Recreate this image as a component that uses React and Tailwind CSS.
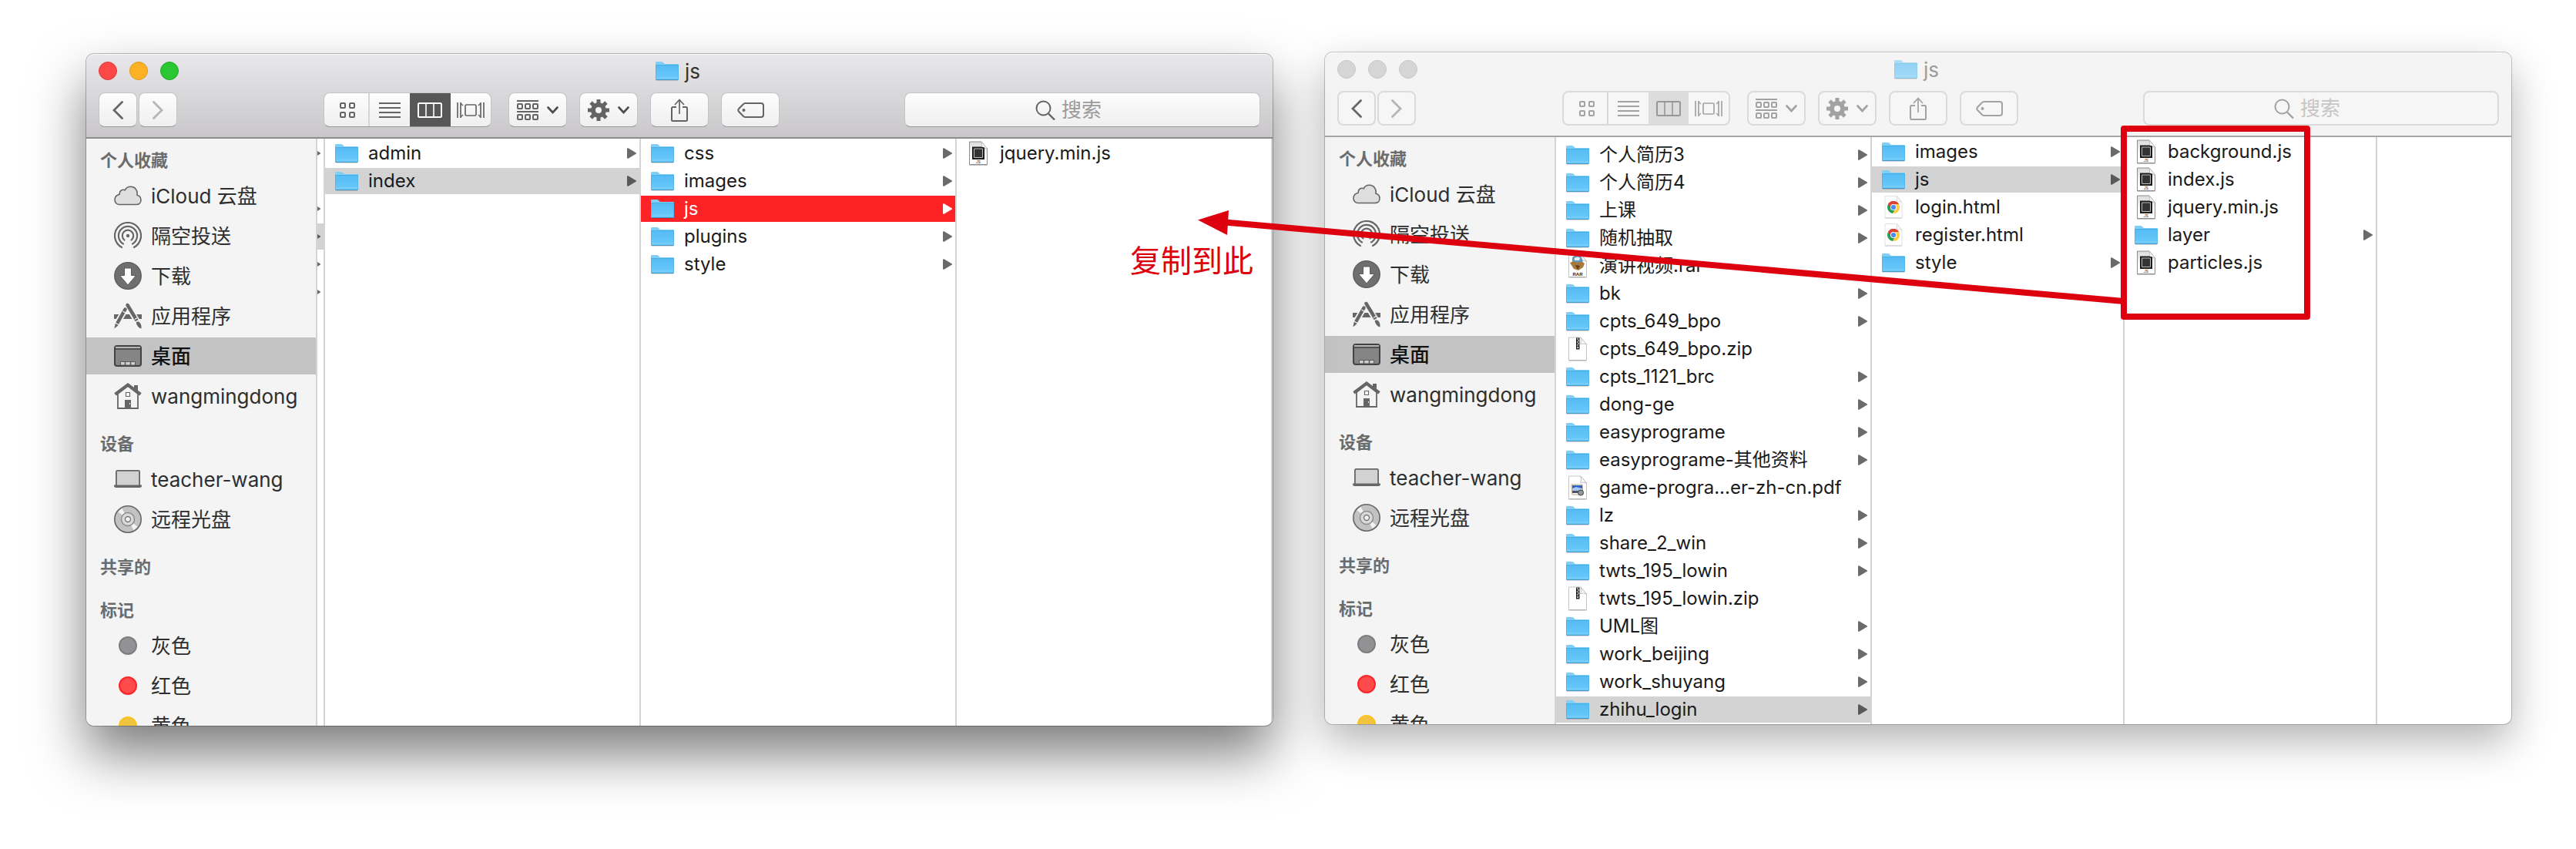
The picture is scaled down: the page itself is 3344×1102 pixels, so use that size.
import React from "react";

/* ---------- file icons ---------- */

function Folder({ faded }) {
  return (
    <svg width="30" height="26" viewBox="0 0 30 26" className={faded ? "shrink-0 opacity-60" : "shrink-0"} aria-hidden="true">
      <defs>
        <linearGradient id="folderFront" x1="0" y1="0" x2="0" y2="1">
          <stop offset="0" stopColor="#55bdf5" />
          <stop offset="1" stopColor="#6cc9fb" />
        </linearGradient>
      </defs>
      <path d="M1 25.5h28" stroke="#000" strokeOpacity=".14" />
      <path d="M0 2.2Q0 1 1.2 1H8q1 0 1.7.8l1.6 1.7q.6.6 1.5.6h16q1.2 0 1.2 1.2V12H0z" fill="#80cff8" />
      <path d="M0 6h30v17.8q0 1.2-1.2 1.2H1.2Q0 25 0 23.800z" fill="url(#folderFront)" />
      <path d="M0 5.500h30" stroke="#4aaee0" />
      <path d="M.5 22h29" stroke="#7fd2fc" />
      <path d="M.5 24.500h29" stroke="#4497c6" />
      <path d="M.5 5v19M29.500 5v19" stroke="#4db1e6" strokeOpacity=".7" />
    </svg>
  );
}

function Page({ children, light }) {
  return (
    <svg width="30" height="32" viewBox="0 0 30 32" className="shrink-0" aria-hidden="true">
      <defs>
        <linearGradient id="pageGrey" x1="0" y1="0" x2="0" y2="1">
          <stop offset="0" stopColor="#dcdcdc" />
          <stop offset="0.7" stopColor="#ffffff" />
        </linearGradient>
      </defs>
      <path
        d="M3.500 1h15.500l7.500 9v20.500h-23z"
        fill={light ? "#ffffff" : "url(#pageGrey)"}
        stroke={light ? "#c6c6c6" : "#8e8e8e"}
      />
      <path d="M3.500 31h23" stroke={light ? "#a9a9a9" : "#8a8a8a"} />
      <path d="M19 1q1.500 6-.5 8.500q4-1 8 .5z" fill="#fafafa" stroke="#b5b5b5" strokeWidth=".8" />
      {children}
    </svg>
  );
}

function JsFile() {
  return (
    <Page>
      <path d="M7 7.500h12l4 1v15.500H7z" fill="#1d1d1d" />
      <path d="M9.500 10h11v11.500h-11z" fill="#333" stroke="#bdbdbd" />
      <text x="15" y="29" textAnchor="middle" fontSize="5" fontStyle="italic" fontFamily="Liberation Sans, sans-serif" fill="#333">JS</text>
    </Page>
  );
}

function ZipFile() {
  return (
    <Page light>
      <path d="M13 1.500h4.500v15H13z" fill="#222" />
      <path d="M14 3h2M15 5h2M14 7h2M15 9h2M14 11h2" stroke="#fff" />
      <path d="M14.500 13h1.500v2h-1.500z" fill="#fff" />
    </Page>
  );
}

function RarFile() {
  return (
    <Page light>
      <path d="M8 5q6-6 12 0l2 5-6 3-8-2z" fill="#5b9cc9" />
      <path d="M11 6q4-3 7 0l-1 3h-6z" fill="#e9eef2" />
      <path d="M5 12l5-2 5 2 5-2 4 3-2 5-6 4-6-2z" fill="#a9783c" />
      <path d="M12 15l6 1-3 5z" fill="#5e3d18" />
      <text x="15" y="29" textAnchor="middle" fontSize="6" fontWeight="bold" fontFamily="Liberation Sans, sans-serif" fill="#222">RAR</text>
    </Page>
  );
}

function PdfFile() {
  return (
    <Page light>
      <path d="M7 12h14l1 13H8z" fill="#fff" stroke="#b9a48a" />
      <path d="M8 13h13v5l-6 1-7 1z" fill="#2f62c4" />
      <path d="M8 17l5-2 8 2v3H8z" fill="#a8c9ee" />
      <path d="M8 20h13v3H8z" fill="#4e5560" />
      <circle cx="19" cy="22.500" r="3.500" fill="#8d99a3" stroke="#444" />
    </Page>
  );
}

function HtmlFile() {
  return (
    <svg width="30" height="32" viewBox="0 0 30 32" className="shrink-0" aria-hidden="true">
      <path d="M4 1.500h15.500l6.500 8v20.500H4z" fill="#fff" stroke="#e2e2e2" />
      <path d="M4 30h22" stroke="#c9c9c9" />
      <circle cx="15" cy="16" r="8" fill="#fff" />
      <path d="M15 16L8.070 12a8 8 0 0 1 13.860 0z" fill="#dd4433" />
      <path d="M8.070 12A8 8 0 0 0 14 23.900l4-6.300L15 16z" fill="#24a159" />
      <path d="M21.930 12A8 8 0 0 1 14 23.900L18.500 17l-1-5z" fill="#fccd3d" />
      <path d="M8.070 12L12 18.500l3-6.500h6.930a8 8 0 0 0-13.860 0z" fill="#dd4433" />
      <circle cx="15" cy="16" r="4" fill="#fff" />
      <circle cx="15" cy="16" r="3.100" fill="#4b8bf4" />
      <path d="M19.500 1.500l-.5 7q4-.5 7 1z" fill="#f8f8f8" stroke="#ddd" />
    </svg>
  );
}

const fileIcons = { folder: Folder, js: JsFile, zip: ZipFile, rar: RarFile, pdf: PdfFile, html: HtmlFile };

function Triangle() {
  return (
    <svg width="12" height="14" viewBox="0 0 12 14" className="shrink-0" aria-hidden="true">
      <path d="M1 1.200L11 7 1 12.800z" fill="currentColor" stroke="currentColor" strokeWidth="2" strokeLinejoin="round" />
    </svg>
  );
}

/* ---------- sidebar icons ---------- */

const glyph = "#666666";

function Cloud() {
  return (
    <svg width="36" height="26" viewBox="0 0 36 26" aria-hidden="true">
      <path
        d="M7 24.500h22c3.500 0 6-2.500 6-6s-2-5.500-5-6.300C31 5.500 27 1.300 21.500 1.300c-3.300 0-6 1.900-7.300 4.500-3.300-1.500-7 .5-7 4.200v1.200C3.500 12 1 14.500 1 18.300c0 3.500 2.500 6.200 6 6.200z"
        fill="#dedede" stroke={glyph} strokeWidth="1.600"
      />
    </svg>
  );
}

function AirDrop() {
  return (
    <svg width="36" height="36" viewBox="0 0 36 36" fill="none" stroke={glyph} strokeWidth="2.200" strokeLinecap="round" aria-hidden="true">
      <path d="M10 33A17 17 0 1 1 26 33" />
      <path d="M12 28.500A12.100 12.100 0 1 1 24 28.500" />
      <path d="M13.500 23.500A7.200 7.200 0 1 1 22.500 23.500" />
      <circle cx="18" cy="18" r="2.200" fill={glyph} stroke="none" />
    </svg>
  );
}

function Download() {
  return (
    <svg width="36" height="36" viewBox="0 0 36 36" aria-hidden="true">
      <circle cx="18" cy="18" r="17.200" fill="#6f6f6f" stroke="#5f5f5f" strokeWidth="1.500" />
      <path d="M13.500 8h9v9.500h6L18 30 7.500 17.500h6z" fill="#fff" stroke="#5a5a5a" />
    </svg>
  );
}

function Apps() {
  return (
    <svg width="36" height="36" viewBox="0 0 36 36" aria-hidden="true">
      <path d="M0 16h36v6H0z" fill={glyph} />
      <path d="M15.500 8L1.500 32M17.500 4L34 32" stroke="#f4f4f4" strokeWidth="8" />
      <path d="M17.500 4L29 23" stroke={glyph} strokeWidth="4.500" strokeLinecap="round" />
      <path d="M14.500 9.500L4 28" stroke={glyph} strokeWidth="4.500" strokeLinecap="round" />
      <path d="M11.500 12l4 2.400M27 22.500l3.800-2.300" stroke="#f4f4f4" strokeWidth="1.200" />
      <path d="M1.800 28l3.800 2.300L.3 34.500z" fill={glyph} />
      <path d="M28.500 26.500q3-3 6 1.500 1.500 3 1 6.500-5-1-7-8z" fill={glyph} />
      <path d="M1.300 26.800l5 3M27.300 26.300l5-2.900" stroke="#f4f4f4" strokeWidth="1.300" />
    </svg>
  );
}

function Desktop() {
  return (
    <svg width="36" height="28" viewBox="0 0 36 28" aria-hidden="true">
      <rect x="1" y="1" width="34" height="26" rx="3" fill="#858585" stroke="#424242" strokeWidth="2" />
      <path d="M2 2h32v2H2z" fill="#b5b5b5" />
      <path d="M1 5h34" stroke="#424242" strokeWidth="1.400" />
      <path d="M8.500 21.500h19V26h-19z" fill="#d0d0d0" stroke="#5a5a5a" />
      <path d="M14.500 22v4M21.500 22v4" stroke="#5a5a5a" strokeWidth="1.500" />
    </svg>
  );
}

function House() {
  return (
    <svg width="36" height="34" viewBox="0 0 36 34" aria-hidden="true">
      <path d="M26 3h5v10h-5z" fill={glyph} />
      <path d="M5 14L18 4l13 10v19H5z" fill="#f4f4f4" stroke={glyph} strokeWidth="1.800" />
      <path d="M1.500 14.800L18 2.500l16.500 12.300" fill="none" stroke={glyph} strokeWidth="4" />
      <path d="M15.500 12.500h5v5h-5z" fill="#fff" stroke={glyph} strokeWidth="1.200" />
      <path d="M14 22h8v11h-8z" fill={glyph} />
      <path d="M20 26h1v2h-1z" fill="#eee" />
    </svg>
  );
}

function Laptop() {
  return (
    <svg width="36" height="24" viewBox="0 0 36 24" aria-hidden="true">
      <rect x="2.900" y=".9" width="30.200" height="20" rx="1.500" fill="#d2d2d2" stroke={glyph} strokeWidth="1.800" />
      <path d="M0 19.500h36v1.500q-.5 2-2.500 2h-31Q.5 23 0 21z" fill={glyph} />
    </svg>
  );
}

function Disc() {
  return (
    <svg width="36" height="36" viewBox="0 0 36 36" aria-hidden="true">
      <circle cx="18" cy="18" r="17.200" fill="#c2c2c2" stroke={glyph} strokeWidth="1.600" />
      <path d="M18 18L5.500 8.500q2-3 5-4.500zM18 18l12.500 9.500q-2 3-5 4.500z" fill="#f2f2f2" />
      <circle cx="18" cy="18" r="8.500" fill="#dadada" stroke="#8b8b8b" strokeWidth="1.400" />
      <circle cx="18" cy="18" r="3.500" fill="#f4f4f4" stroke="#777" strokeWidth="1.400" />
    </svg>
  );
}

const Dot = ({ tone }) => <span className={"block size-6 rounded-full border-2 " + tone} />;

/* ---------- toolbar icons ---------- */

const GridIcon = () => (
  <svg width="20" height="20" viewBox="0 0 20 20" fill="none" stroke="currentColor" strokeWidth="2" aria-hidden="true">
    <rect x="1" y="1" width="6" height="6" rx="1" />
    <rect x="13" y="1" width="6" height="6" rx="1" />
    <rect x="1" y="13" width="6" height="6" rx="1" />
    <rect x="13" y="13" width="6" height="6" rx="1" />
  </svg>
);

const ListIcon = () => (
  <svg width="28" height="20" viewBox="0 0 28 20" stroke="currentColor" strokeWidth="2" aria-hidden="true">
    <path d="M0 1h28M0 7h28M0 13h28M0 19h28" />
  </svg>
);

const ColumnsIcon = () => (
  <svg width="32" height="20" viewBox="0 0 32 20" fill="none" stroke="currentColor" strokeWidth="2" aria-hidden="true">
    <rect x="1" y="1" width="30" height="18" rx="1.500" />
    <path d="M11 1v18M21 1v18" strokeWidth="1.600" />
  </svg>
);

const CoverIcon = () => (
  <svg width="36" height="20" viewBox="0 0 36 20" fill="none" stroke="currentColor" strokeWidth="1.700" aria-hidden="true">
    <path d="M1 0v20M35 0v20" />
    <path d="M5 0v20M31 0v20" />
    <path d="M5 1l3 3M5 19l3-3M31 1l-3 3M31 19l-3-3" strokeWidth="1.400" />
    <rect x="11" y="3" width="14" height="14" rx="1.500" />
  </svg>
);

const ArrangeIcon = () => (
  <svg width="28" height="26" viewBox="0 0 28 26" fill="none" stroke="currentColor" strokeWidth="2" aria-hidden="true">
    <path d="M0 1h28M0 15h28" />
    <rect x="1" y="5" width="6" height="6" rx="1" />
    <rect x="11" y="5" width="6" height="6" rx="1" />
    <rect x="21" y="5" width="6" height="6" rx="1" />
    <rect x="1" y="19" width="6" height="6" rx="1" />
    <rect x="11" y="19" width="6" height="6" rx="1" />
    <rect x="21" y="19" width="6" height="6" rx="1" />
  </svg>
);

const GearIcon = () => (
  <svg width="28" height="28" viewBox="0 0 28 28" fill="none" stroke="currentColor" aria-hidden="true">
    <circle cx="14" cy="14" r="7" strokeWidth="6" />
    <path
      d="M14 0v5M14 23v5M0 14h5M23 14h5M4.100 4.100l3.600 3.600M20.300 20.300l3.600 3.600M4.100 23.900l3.600-3.600M20.300 7.700l3.600-3.600"
      strokeWidth="5"
    />
  </svg>
);

const DownChevron = () => (
  <svg width="15" height="10" viewBox="0 0 15 10" fill="none" stroke="currentColor" strokeWidth="2.600" strokeLinecap="round" aria-hidden="true">
    <path d="M1.500 1.500l6 6.500 6-6.500" />
  </svg>
);

const ShareIcon = () => (
  <svg width="22" height="30" viewBox="0 0 22 30" fill="none" stroke="currentColor" strokeWidth="2" aria-hidden="true">
    <path d="M7 11H2.500Q1 11 1 12.500v15Q1 29 2.500 29h17q1.500 0 1.500-1.500v-15Q21 11 19.500 11H15" />
    <path d="M11 20V2M5 8l6-6.500L17 8" strokeWidth="1.700" />
  </svg>
);

const TagIcon = () => (
  <svg width="35" height="20" viewBox="0 0 35 20" fill="none" stroke="currentColor" strokeWidth="2" aria-hidden="true">
    <path d="M10.500 1H31q3 0 3 3v12q0 3-3 3H10.500q-1.700 0-2.700-1.300L1.800 11.500q-1-1.500 0-3l6-6.200Q8.800 1 10.500 1z" />
    <circle cx="8.500" cy="10" r="2" fill="currentColor" stroke="none" />
  </svg>
);

const SearchIcon = () => (
  <svg width="26" height="26" viewBox="0 0 26 26" fill="none" stroke="currentColor" strokeWidth="2" aria-hidden="true">
    <circle cx="10.500" cy="10.500" r="9" />
    <path d="M17 17.500l8 8" strokeWidth="2.400" />
  </svg>
);

const NavChevron = ({ flip }) => (
  <svg width="14" height="24" viewBox="0 0 14 24" fill="none" stroke="currentColor" strokeWidth="2.800" strokeLinecap="round" aria-hidden="true">
    <path d={flip ? "M1.500 1.500L12 12 1.500 22.500" : "M12.500 1.500L2 12l10.500 10.500"} />
  </svg>
);

/* ---------- window header ---------- */

const activeTheme = {
  window: "z-10 mt-0.5 border-t-[#fafafa] shadow-[0_0_0_1px_rgba(0,0,0,0.25),0_36px_70px_rgba(0,0,0,0.52)]",
  header: "bg-linear-to-b from-[#e8e7e9] to-[#c9c7ca] border-[#8c8c8c]",
  title: "text-[#333]",
  button:
    "bg-linear-to-b from-[#fdfdfd] to-[#efefef] border border-[#c4c3c5] border-b-[#979797] text-[#646464]",
  chevron: "text-[#4d4d4d]",
  divide: "border-[#d6d6d6]",
  selected: "bg-[#575757] text-white",
  placeholder: "placeholder:text-[#9b9b9b]",
  lights: ["bg-[#fc4948] border-[#df3637]", "bg-[#fdb225] border-[#dc9720]", "bg-[#2ac733] border-[#20a929]"],
};

const idleTheme = {
  window: "border-t-white shadow-[0_0_0_1px_rgba(0,0,0,0.2),0_22px_54px_rgba(0,0,0,0.3)]",
  header: "bg-[#f4f4f4] border-[#a6a6a6]",
  title: "text-[#9c9c9c]",
  button: "bg-[#f6f6f6] border-2 border-[#dadada] text-[#a2a2a2]",
  chevron: "text-[#a2a2a2]",
  divide: "border-[#d8d8d8]",
  selected: "bg-[#dcdcdc] text-[#979797]",
  placeholder: "placeholder:text-[#c6c6c6]",
  lights: ["bg-[#d5d5d5] border-[#c5c5c5]", "bg-[#d5d5d5] border-[#c5c5c5]", "bg-[#d5d5d5] border-[#c5c5c5]"],
};

function ToolButton({ theme, label, className, children }) {
  return (
    <button type="button" aria-label={label} className={"flex h-[45px] items-center justify-center rounded-lg " + theme.button + " " + className}>
      {children}
    </button>
  );
}

function Header({ theme, id }) {
  const views = [
    ["图标视图", <GridIcon />],
    ["列表视图", <ListIcon />],
    ["分栏视图", <ColumnsIcon />],
    ["封面流视图", <CoverIcon />],
  ];
  return (
    <header className={"flex h-[109px] flex-col border-b-2 px-4 " + theme.header}>
      <div className="grid h-[49px] grid-cols-3 items-center pb-[7px]">
        <div className="flex gap-4">
          {theme.lights.map((tone, i) => (
            <button key={i} type="button" aria-label={["关闭", "最小化", "缩放"][i]} className={"size-6 rounded-full border " + tone} />
          ))}
        </div>
        <h1 className={"flex items-center justify-center gap-2 pr-1 text-[26px] " + theme.title}>
          <Folder faded={theme === idleTheme} />
          js
        </h1>
      </div>
      <div className="flex items-center">
        <div className="flex gap-0.5">
          <ToolButton theme={theme} label="后退" className="w-[50px]">
            <span className="text-[#666]"><NavChevron /></span>
          </ToolButton>
          <ToolButton theme={theme} label="前进" className="w-[50px]">
            <span className="text-[#b5b5b5]"><NavChevron flip /></span>
          </ToolButton>
        </div>
        <div className={"ml-[190px] mr-[22px] flex h-[45px] w-[218px] overflow-hidden rounded-lg " + theme.button}>
          {views.map(([label, icon], i) => (
            <button
              key={label}
              type="button"
              aria-label={label}
              className={"flex flex-1 items-center justify-center " + (i === 2 ? theme.selected : i === 0 ? "border-r-2 pl-1 " + theme.divide : "")}
            >
              {icon}
            </button>
          ))}
        </div>
        <div className="flex gap-4">
          <ToolButton theme={theme} label="排列" className="w-[76px] gap-[11px]">
            <ArrangeIcon />
            <span className={theme.chevron}><DownChevron /></span>
          </ToolButton>
          <ToolButton theme={theme} label="操作" className="w-[76px] gap-[11px]">
            <GearIcon />
            <span className={theme.chevron}><DownChevron /></span>
          </ToolButton>
          <ToolButton theme={theme} label="共享" className="w-[76px]"><ShareIcon /></ToolButton>
          <ToolButton theme={theme} label="标记" className="w-[76px]"><TagIcon /></ToolButton>
        </div>
        <label htmlFor={id} className={"ml-auto flex h-[45px] w-[462px] items-center justify-center gap-2 rounded-lg " + theme.button}>
          <SearchIcon />
          <input id={id} type="search" aria-label="搜索" placeholder="搜索" className={"w-[88px] bg-transparent text-[26px] leading-8 outline-none " + theme.placeholder} />
        </label>
      </div>
    </header>
  );
}

/* ---------- sidebar ---------- */

const sections = [
  {
    title: "个人收藏",
    items: [
      ["iCloud 云盘", <Cloud />],
      ["隔空投送", <AirDrop />],
      ["下载", <Download />],
      ["应用程序", <Apps />],
      ["桌面", <Desktop />, true],
      ["wangmingdong", <House />],
    ],
  },
  { title: "设备", items: [["teacher-wang", <Laptop />], ["远程光盘", <Disc />]] },
  { title: "共享的", items: [] },
  {
    title: "标记",
    items: [
      ["灰色", <Dot tone="bg-[#929294] border-[#7d7d80]" />],
      ["红色", <Dot tone="bg-[#fd4b4b] border-[#fb2427]" />],
      ["黄色", <Dot tone="bg-[#f0c440] border-[#fbc21a]" />],
    ],
  },
];

function Sidebar() {
  return (
    <nav className="flex h-full w-[300px] shrink-0 flex-col gap-3 overflow-hidden border-r-2 border-[#d4d4d4] bg-[#f4f4f4] pt-1.5">
      {sections.map((s) => (
        <section key={s.title} className="shrink-0">
          <h2 className="flex h-11 items-center pl-[18px] text-[22px] font-semibold text-[#6b6b6b]">{s.title}</h2>
          <ul>
            {s.items.map(([name, icon, selected]) => (
              <li key={name} className="mb-1">
                <button
                  type="button"
                  className={
                    "flex h-12 w-full items-center gap-3 pl-9 text-[26px] whitespace-nowrap " +
                    (selected ? "bg-[#c3c3c3] font-medium text-[#111]" : "text-[#2e2e2e]")
                  }
                >
                  <span className="flex w-9 justify-center">{icon}</span>
                  {name}
                </button>
              </li>
            ))}
          </ul>
        </section>
      ))}
    </nav>
  );
}

/* ---------- file columns ---------- */

const f = (name, kind = "folder", state = "") => ({ name, kind, state });

function FileRow({ item }) {
  const Icon = fileIcons[item.kind];
  const tone =
    item.state === "red" ? "bg-[#fc2226] text-white" : item.state === "grey" ? "bg-[#d3d3d3] text-[#1a1a1a]" : "text-[#1a1a1a]";
  const arrow = item.state === "red" ? "text-white" : item.state === "grey" ? "text-[#595959]" : "text-[#6b6b6b]";
  return (
    <li>
      <button type="button" className={"flex h-[34px] w-full items-center pl-[13px] pr-1 text-left text-2xl whitespace-nowrap " + tone}>
        <Icon />
        <span className="ml-[13px] flex-1">{item.name}</span>
        {item.kind === "folder" && <span className={arrow}><Triangle /></span>}
      </button>
    </li>
  );
}

function Column({ items = [], className }) {
  return (
    <ul className={"flex min-w-0 flex-col gap-0.5 overflow-hidden border-[#d4d4d4] " + className}>
      {items.map((item) => (
        <FileRow key={item.name} item={item} />
      ))}
    </ul>
  );
}

function ScrolledColumn() {
  return (
    <div className="flex w-2.5 shrink-0 flex-col gap-0.5 overflow-hidden border-r-2 border-[#d4d4d4] pt-0.5 text-[#6b6b6b]">
      {[1, 0, 1, 2, 1, 1].map((mark, i) => (
        <div key={i} className={"flex h-[34px] items-center justify-end pr-1 " + (mark === 2 ? "bg-[#d3d3d3] text-[#595959]" : "")}>
          {mark > 0 && <Triangle />}
        </div>
      ))}
    </div>
  );
}

function FinderWindow({ theme, id, children }) {
  return (
    <section className={"relative min-w-0 flex-1 overflow-hidden rounded-[10px] border-t bg-white " + theme.window}>
      <Header theme={theme} id={id} />
      <div className="flex h-[762px]">
        <Sidebar />
        {children}
      </div>
    </section>
  );
}

const indexFiles = [f("css"), f("images"), f("js", "folder", "red"), f("plugins"), f("style")];

const desktopFiles = [
  f("个人简历3"),
  f("个人简历4"),
  f("上课"),
  f("随机抽取"),
  f("演讲视频.rar", "rar"),
  f("bk"),
  f("cpts_649_bpo"),
  f("cpts_649_bpo.zip", "zip"),
  f("cpts_1121_brc"),
  f("dong-ge"),
  f("easyprograme"),
  f("easyprograme-其他资料"),
  f("game-progra...er-zh-cn.pdf", "pdf"),
  f("lz"),
  f("share_2_win"),
  f("twts_195_lowin"),
  f("twts_195_lowin.zip", "zip"),
  f("UML图"),
  f("work_beijing"),
  f("work_shuyang"),
  f("zhihu_login", "folder", "grey"),
];

const loginFiles = [f("images"), f("js", "folder", "grey"), f("login.html", "html"), f("register.html", "html"), f("style")];

const scriptFiles = [f("background.js", "js"), f("index.js", "js"), f("jquery.min.js", "js"), f("layer"), f("particles.js", "js")];

/* ---------- annotations drawn over both windows ---------- */

function Annotations() {
  return (
    <div className="pointer-events-none absolute inset-0 z-20 overflow-hidden">
      <svg className="absolute left-0 top-0" width="3000" height="420" viewBox="0 0 3000 420" aria-hidden="true">
        <path d="M1590 288.500L2757 391" stroke="#dd000f" strokeWidth="8" />
        <path d="M1555 285.500L1595 273l-2 32z" fill="#dd000f" />
      </svg>
      <div className="absolute left-[2753px] top-[163px] h-[252px] w-[246px] rounded-sm border-8 border-[#dd000f]" />
      <p className="absolute left-[1467px] top-[315px] text-[40px] leading-12 text-[#dd000f]">复制到此</p>
    </div>
  );
}

export default function App() {
  return (
    <main className="relative flex min-h-screen items-start gap-[68px] overflow-hidden bg-white pl-28 pr-[84px] pt-[68px] font-['Inter','Noto_Sans_CJK_SC',sans-serif]">
      <FinderWindow theme={activeTheme} id="search-left">
        <ScrolledColumn />
        <Column items={[f("admin"), f("index", "folder", "grey")]} className="flex-1 border-r-2 pt-0.5" />
        <Column items={indexFiles} className="flex-1 border-r-2 pt-0.5" />
        <Column items={[f("jquery.min.js", "js")]} className="flex-1 border-r-2 pt-0.5" />
      </FinderWindow>
      <FinderWindow theme={idleTheme} id="search-right">
        <Column items={desktopFiles} className="w-[410px] shrink-0 border-r-2 pt-1.5" />
        <Column items={loginFiles} className="w-[328px] shrink-0 border-r-2 pt-0.5" />
        <Column items={scriptFiles} className="w-[328px] shrink-0 border-r-2 pt-0.5" />
        <Column className="flex-1" />
      </FinderWindow>
      <Annotations />
    </main>
  );
}
